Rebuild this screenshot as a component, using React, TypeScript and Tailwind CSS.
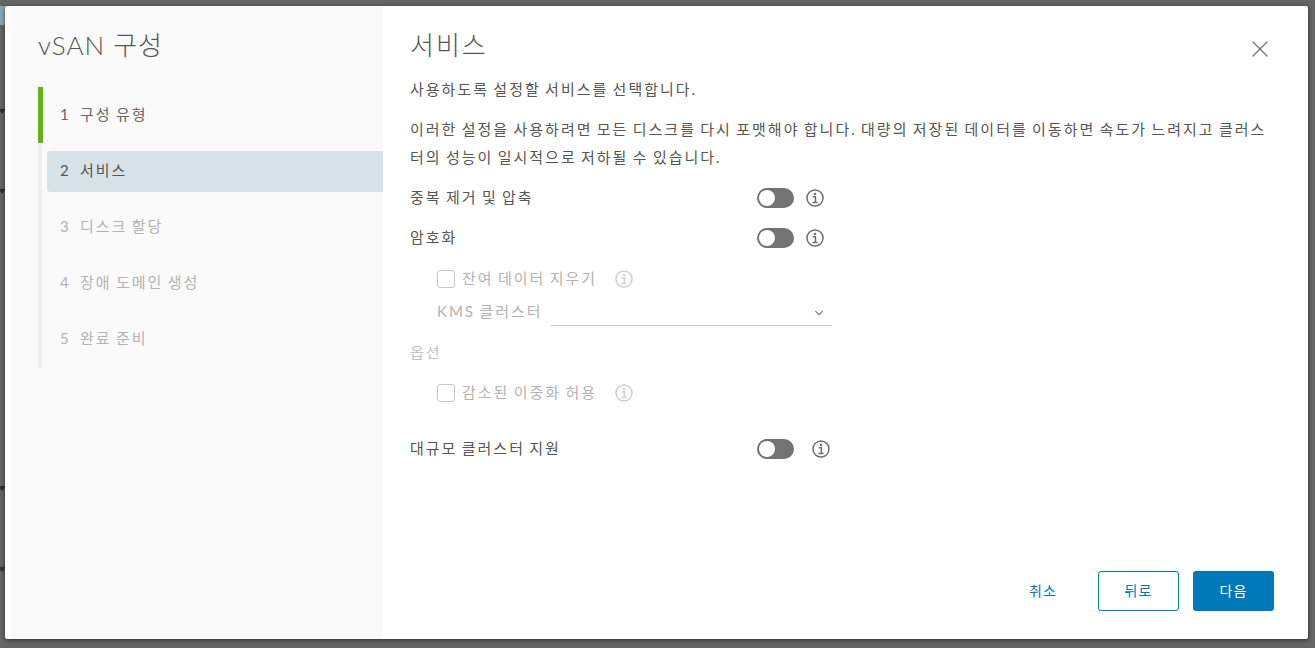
import { ChevronDown, X } from "lucide-react";

const steps = [
  { n: 1, label: "구성 유형", cls: "text-[#666666]" },
  { n: 2, label: "서비스", cls: "text-[#565656] bg-[#d8e3e9] rounded-l-[3px]" },
  { n: 3, label: "디스크 할당", cls: "text-[#b3b3b3]" },
  { n: 4, label: "장애 도메인 생성", cls: "text-[#b3b3b3]" },
  { n: 5, label: "완료 준비", cls: "text-[#b3b3b3]" },
];

const InfoIcon = ({ light }: { light?: boolean }) => (
  <svg width="18" height="18" viewBox="0 0 18 18" fill="none" className={light ? "text-[#cfcfcf]" : "text-[#6f6f6f]"}>
    <circle cx="9" cy="9" r="8" stroke="currentColor" strokeWidth="1.5" />
    <circle cx="9" cy="5" r="1.3" fill="currentColor" />
    <path d="M6.8 7.8h2.6v5.4M6.4 13.4h5.2" stroke="currentColor" strokeWidth="1.5" />
  </svg>
);

const Toggle = () => (
  <div className="w-[37px] h-[20px] rounded-full bg-[#737373] p-[2px] flex">
    <div className="w-[16px] h-[16px] rounded-full bg-white" />
  </div>
);

const Check = ({ label }: { label: string }) => (
  <div className="flex items-center h-[18px]">
    <div className="w-[18px] h-[18px] rounded-[3px] border border-[#c8c8c8] bg-white" />
    <span className="ml-[7px] w-[153px] whitespace-nowrap pb-[2px] text-[#b3b3b3]">{label}</span>
    <InfoIcon light />
  </div>
);

const Row = ({ label, iconGap, className }: { label: string; iconGap: string; className: string }) => (
  <div className={`flex items-center h-[20px] text-[#565656] ${className}`}>
    <span className="w-[347px] pb-[2px]">{label}</span>
    <Toggle />
    <span className={iconGap}><InfoIcon /></span>
  </div>
);

// bits of the page behind the dialog, they stick out at the left edge
const EdgeMark = ({ cls }: { cls: string }) => (
  <div className={`absolute -left-[2px] w-0 h-0 border-x-[4px] border-t-[5px] border-x-transparent border-t-[#333333] ${cls}`} />
);

export default function App() {
  return (
    <div className="relative h-[648px] w-[1315px] overflow-hidden bg-[#656565] pt-[6px] pl-[5px] text-[15px] font-['Lato','Noto_Sans_CJK_KR',sans-serif] tracking-[2px] [word-spacing:-1.5px]">
      <div className="absolute left-0 top-[6px] w-[5px] h-[19px] bg-[#8fa3b0]" />
      <EdgeMark cls="top-[109px]" />
      <EdgeMark cls="top-[189px]" />
      <EdgeMark cls="top-[486px]" />
      <EdgeMark cls="top-[567px]" />
      <div className="relative w-[1303px] h-[633px] bg-white rounded-[2px] flex pl-[6px] shadow-[0_1px_4px_rgba(0,0,0,0.6)]">
        <aside className="w-[372px] shrink-0 bg-[#fafafa] pl-[27px] pt-[20px]">
          <h2 className="text-[26px] leading-[38px] font-light text-[#565656] tracking-[1px] [word-spacing:0px]">vSAN 구성</h2>
          <div className="mt-[23px] border-l-[4px] border-[#eeeeee] relative h-[281px] pl-[5px] flex flex-col">
            <div className="absolute -left-[4px] top-0 w-[5px] h-[56px] bg-[#60b515]" />
            {steps.map((s, i) => (
              <div
                key={s.n}
                className={`flex items-center h-[41px] pl-[13px] pb-[2px] ${i === 0 ? "mt-[8px]" : "mt-[15px]"} ${s.cls}`}
              >
                <span className="w-[20px]">{s.n}</span>
                <span>{s.label}</span>
              </div>
            ))}
          </div>
        </aside>
        <main className="flex-1 pl-[27px] pr-[38px] pt-[20px] relative flex flex-col">
          <button className="absolute right-[34px] top-[29px] text-[#737373]">
            <X size={28} strokeWidth={1.1} />
          </button>
          <h1 className="text-[26px] leading-[38px] font-light text-[#565656] tracking-[2px]">서비스</h1>
          <p className="mt-[13px] leading-[24px] text-[#565656]">사용하도록 설정할 서비스를 선택합니다.</p>
          <p className="mt-[14px] leading-[28px] text-[#565656]">
            이러한 설정을 사용하려면 모든 디스크를 다시 포맷해야 합니다. 대량의 저장된 데이터를 이동하면 속도가 느려지고 클러스터의 성능이 일시적으로 저하될 수 있습니다.
          </p>

          <Row label="중복 제거 및 압축" iconGap="ml-[12px]" className="mt-[17px]" />
          <Row label="암호화" iconGap="ml-[12px]" className="mt-[20px]" />

          <div className="mt-[22px] pl-[27px]">
            <Check label="잔여 데이터 지우기" />
            <div className="mt-[12px] flex items-end h-[26px]">
              <span className="w-[114px] self-center whitespace-nowrap pb-[4px] text-[#b3b3b3]">KMS 클러스터</span>
              <div className="w-[281px] h-[26px] border-b border-[#c8c8c8] flex items-center justify-end pr-[6px] text-[#8c8c8c]">
                <ChevronDown size={14} />
              </div>
            </div>
          </div>
          <div className="mt-[16px] leading-[20px] text-[#c4c4c4]">옵션</div>
          <div className="mt-[22px] pl-[27px]">
            <Check label="감소된 이중화 허용" />
          </div>

          <Row label="대규모 클러스터 지원" iconGap="ml-[18px]" className="mt-[37px]" />

          <div className="mt-auto mb-[28px] -mr-[4px] flex justify-end items-center text-[14px] tracking-[1px]">
            <button className="h-[40px] w-[70px] pb-[2px] text-[#0079b8]">취소</button>
            <button className="ml-[20px] h-[40px] w-[81px] pb-[2px] rounded-[3px] border border-[#0079b8] text-[#0079b8]">뒤로</button>
            <button className="ml-[14px] h-[40px] w-[81px] pb-[2px] rounded-[3px] bg-[#0079b8] text-white">다음</button>
          </div>
        </main>
      </div>
    </div>
  );
}
